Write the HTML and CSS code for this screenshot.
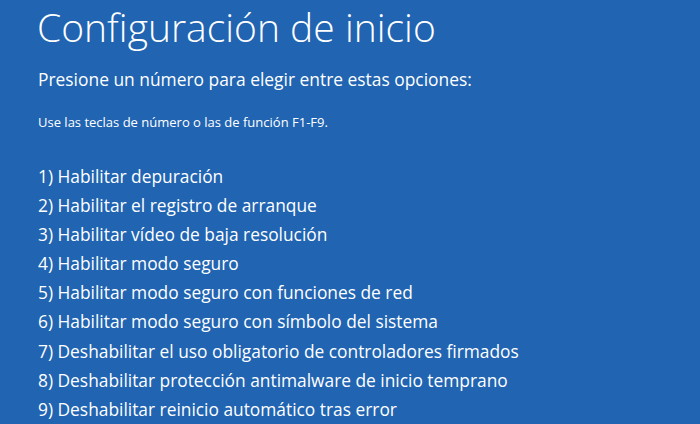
FILE: index.html
```html
<!DOCTYPE html>
<html lang="es">
<head>
<meta charset="utf-8">
<link rel="stylesheet" href="styles.css">
</head>
<body>
<main class="screen">
  <h1 class="title">Configuración de inicio</h1>
  <p class="prompt">Presione un número para elegir entre estas opciones:</p>
  <p class="hint">Use las teclas de número o las de función F1-F9.</p>
  <ol class="options">
    <li>1) Habilitar depuración</li>
    <li>2) Habilitar el registro de arranque</li>
    <li>3) Habilitar vídeo de baja resolución</li>
    <li>4) Habilitar modo seguro</li>
    <li>5) Habilitar modo seguro con funciones de red</li>
    <li>6) Habilitar modo seguro con símbolo del sistema</li>
    <li>7) Deshabilitar el uso obligatorio de controladores firmados</li>
    <li>8) Deshabilitar protección antimalware de inicio temprano</li>
    <li>9) Deshabilitar reinicio automático tras error</li>
  </ol>
</main>
</body>
</html>
```
FILE: styles.css
```css
html, body {
  margin: 0;
  padding: 0;
  background: #2064b2;
}
body {
  width: 700px;
  height: 424px;
  overflow: hidden;
  font-family: "Open Sans", "Noto Sans", sans-serif;
  color: #ffffff;
}
.screen {
  padding: 2px 0 0 37px;
}
.title {
  margin: 0;
  font-size: 39px;
  font-weight: 300;
  line-height: 50px;
}
.prompt {
  margin: 15px 0 0 1px;
  font-size: 17.4px;
  font-weight: 400;
  line-height: 24px;
}
.hint {
  margin: 22px 0 0 1px;
  font-size: 13px;
  line-height: 18px;
}
.options {
  list-style: none;
  margin: 31px 0 0 1px;
  padding: 0;
}
.options li {
  font-size: 17.35px;
  line-height: 29.1px;
}
```
